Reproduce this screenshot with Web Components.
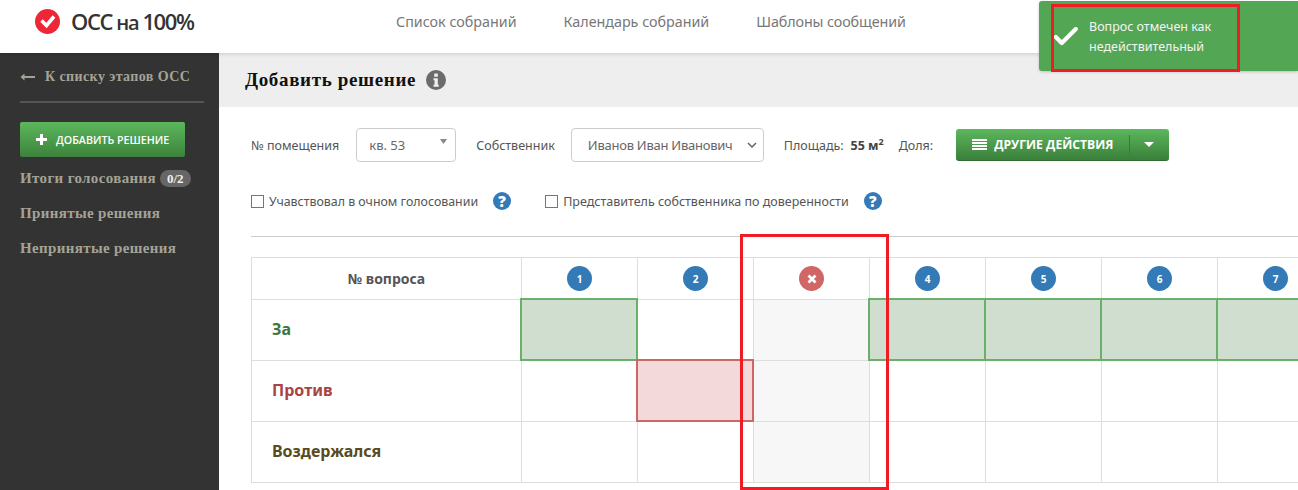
<!DOCTYPE html>
<html lang="ru">
<head>
<meta charset="utf-8">
<title>ОСС на 100%</title>
<style>
    html, body{ margin: 0; height: 100%; }
    body{
        width: 1298px;
        height: 490px;
        overflow: hidden;
        position: relative;
        font-family: "Noto Sans", sans-serif;
        color: #555;
        background: #fff;
    }
</style>
</head>
<body>
<app-shell>
    <app-header slot="top"></app-header>
    <side-bar slot="side"></side-bar>
    <page-title slot="main">Добавить решение</page-title>
    <owner-form slot="main"></owner-form>
    <vote-table slot="main"></vote-table>
</app-shell>
<toast-note>Вопрос отмечен как недействительный</toast-note>
<mark-frame style="left:1051px;top:4px;width:189px;height:68px"></mark-frame>
<mark-frame style="left:740px;top:234px;width:149px;height:256px"></mark-frame>

<script>
class AppShell extends HTMLElement{
    constructor(){
        super();
        this.attachShadow({mode: 'open'});
        this.shadowRoot.innerHTML = `
            <style>
                :host{ display: grid; grid-template: 53px 437px / 219px 1079px; width: 1298px; height: 490px; }
                .top{ grid-column: 1 / 3; position: relative; z-index: 2; }
                .main{ overflow: hidden; }
            </style>
            <div class="top"><slot name="top"></slot></div>
            <div><slot name="side"></slot></div>
            <div class="main"><slot name="main"></slot></div>`;
    }
}

class AppHeader extends HTMLElement{
    constructor(){
        super();
        this.attachShadow({mode: 'open'});
        this.shadowRoot.innerHTML = `
            <style>
                :host{ display: flex; align-items: center; height: 53px; background: #fff; box-shadow: 0 1px 4px rgba(0,0,0,.15); padding: 0 0 11px 35px; box-sizing: border-box; }
                svg{ display: block; margin-right: 11px; }
                .logo{ font: 600 22px "Open Sans", sans-serif; letter-spacing: -1.4px; color: #333; width: 325px; white-space: nowrap; }
                .logo small{ font-size: 20px; }
                nav{ display: flex; gap: 47px; font-size: 14.3px; color: #777; }
                nav span:last-child{ letter-spacing: -.1px; }
            </style>
            <svg width="25" height="25" viewBox="0 0 25 25">
                <circle cx="12.5" cy="12.5" r="12.5" fill="#ee2737"/>
                <path d="M6.5 11.5l5 5 7.5-9" fill="none" stroke="#fff" stroke-width="3.6"/>
            </svg>
            <div class="logo">ОСС <small>на</small> 100%</div>
            <nav><span>Список собраний</span><span>Календарь собраний</span><span>Шаблоны сообщений</span></nav>`;
    }
}

class SideBar extends HTMLElement{
    constructor(){
        super();
        this.attachShadow({mode: 'open'});
        this.shadowRoot.innerHTML = `
            <style>
                :host{ display: block; height: 100%; box-sizing: border-box; background: #333; color: #a5a396; padding: 14px 15px 0 20px; font: bold 15px "Liberation Serif", serif; letter-spacing: .35px; }
                .back{ display: flex; align-items: center; gap: 10px; height: 19px; padding-bottom: 15px; border-bottom: 2px solid #555; font-size: 14px; letter-spacing: .4px; white-space: nowrap; }
                .btn{ display: flex; align-items: center; gap: 9px; width: 165px; height: 35px; box-sizing: border-box; margin-top: 19px; padding-left: 16px; border-radius: 2px; background: linear-gradient(#5cb85c, #3c823c); color: #fff; font: 600 10.7px "Open Sans", sans-serif; letter-spacing: 0; }
                .item{ display: flex; align-items: center; gap: 4px; height: 35px; white-space: nowrap; }
                .item.first{ margin-top: 4px; }
                .badge{ background: #666; color: #eee; border-radius: 9px; padding: 0 7px; font-size: 13px; line-height: 17px; letter-spacing: 0; }
            </style>
            <div class="back">
                <svg width="15" height="10" viewBox="0 0 15 10"><path d="M0.5 5l4-3.5v2.6H15v1.8H4.500v2.600z" fill="#a5a396"/></svg>
                К списку этапов ОСС
            </div>
            <div class="btn">
                <svg width="11" height="11" viewBox="0 0 11 11"><path d="M4 0h3v4h4v3H7v4H4V7H0V4h4z" fill="#fff"/></svg>
                ДОБАВИТЬ РЕШЕНИЕ
            </div>
            <div class="item first">Итоги голосования <span class="badge">0/2</span></div>
            <div class="item">Принятые решения</div>
            <div class="item">Непринятые решения</div>`;
    }
}

class PageTitle extends HTMLElement{
    constructor(){
        super();
        this.attachShadow({mode: 'open'});
        this.shadowRoot.innerHTML = `
            <style>
                :host{ display: flex; align-items: center; gap: 10px; height: 54px; box-sizing: border-box; padding-left: 26px; background: #eee; color: #111; font: bold 19px "Liberation Serif", serif; letter-spacing: .65px; }
            </style>
            <slot></slot>
            <svg width="20" height="20" viewBox="0 0 20 20">
                <circle cx="10" cy="10" r="10" fill="#6b6b6b"/>
                <rect x="8.200" y="3.500" width="3.600" height="3.200" rx=".5" fill="#eee"/>
                <path d="M7.500 8.200h4.300v6.500h1v2H7.500v-2h1v-4.500h-1z" fill="#eee"/>
            </svg>`;
    }
}

class HelpMark extends HTMLElement{
    constructor(){
        super();
        this.attachShadow({mode: 'open'});
        this.shadowRoot.innerHTML = `
            <style>
                :host{ display: inline-flex; align-items: center; justify-content: center; width: 18px; height: 18px; border-radius: 50%; background: #337ab7; color: #fff; font: 800 15px "Open Sans", sans-serif; }
            </style>?`;
    }
}

class SelectBox extends HTMLElement{
    constructor(){
        super();
        this.attachShadow({mode: 'open'});
        this.shadowRoot.innerHTML = `
            <style>
                :host{ display: flex; align-items: center; justify-content: space-between; height: 34px; box-sizing: border-box; border: 1px solid #ccc; border-radius: 4px; font-size: 13px; color: #666; white-space: nowrap; }
            </style>
            <slot></slot><slot name="arrow"></slot>`;
    }
}

class GreenButton extends HTMLElement{
    constructor(){
        super();
        this.attachShadow({mode: 'open'});
        this.shadowRoot.innerHTML = `
            <style>
                :host{ display: flex; align-items: center; width: 213px; height: 32px; box-sizing: border-box; padding-left: 16px; border-radius: 3px; background: linear-gradient(#5cb85c, #3a7f3a); border-bottom: 1px solid #2f6b2f; color: #fff; font: 700 12.2px "Open Sans", sans-serif; white-space: nowrap; }
                svg.bars{ margin-right: 7px; }
                .sep{ width: 1px; height: 20px; background: #3a7a3a; margin: 0 14px 0 16px; }
            </style>
            <svg class="bars" width="15" height="11" viewBox="0 0 15 11"><path d="M0 0h15v2H0zM0 3h15v2H0zM0 6h15v2H0zM0 9h15v2H0z" fill="#fff"/></svg>
            ДРУГИЕ ДЕЙСТВИЯ
            <span class="sep"></span>
            <svg width="10" height="5" viewBox="0 0 10 5"><path d="M0 0h10L5 5z" fill="#fff"/></svg>`;
    }
}

class OwnerForm extends HTMLElement{
    constructor(){
        super();
        this.attachShadow({mode: 'open'});
        this.shadowRoot.innerHTML = `
            <style>
                :host{ display: block; margin: 0 0 0 32px; font-size: 12.500px; color: #555; white-space: nowrap; }
                .row1{ display: flex; align-items: center; height: 34px; padding-top: 21px; }
                .row2{ display: flex; align-items: center; height: 20px; margin-top: 29px; padding-bottom: 25px; border-bottom: 1px solid #ccc; }
                .box{ width: 11px; height: 11px; border: 1px solid #767676; margin-right: 5px; }
                b{ color: #444; margin-left: 7px; }
                sup{ font-size: 9px; line-height: 0; }
                .room{ width: 100px; padding-left: 12px; padding-right: 8px; margin: 0 20px 0 17px; }
                .owner{ width: 193px; padding-left: 16px; padding-right: 6px; margin: 0 20px 0 16px; letter-spacing: -.25px; }
                .tri{ align-self: flex-start; margin-top: 10px; }
            </style>
            <div class="row1">
                <span>№ помещения</span>
                <select-box class="room" style="box-sizing:border-box">кв. 53
                    <svg class="tri" slot="arrow" width="7" height="5" viewBox="0 0 7 5"><path d="M0 0h7L3.500 5z" fill="#888"/></svg>
                </select-box>
                <span>Собственник</span>
                <select-box class="owner" style="box-sizing:border-box">Иванов Иван Иванович
                    <svg slot="arrow" width="10" height="6" viewBox="0 0 10 6"><path d="M1 1l4 4 4-4" fill="none" stroke="#666" stroke-width="1.500"/></svg>
                </select-box>
                <span>Площадь:</span><b>55 м<sup>2</sup></b>
                <span style="margin:0 23px 0 15px">Доля:</span>
                <green-button></green-button>
            </div>
            <div class="row2">
                <span class="box"></span><span style="font-size:12.4px">Учавствовал в очном голосовании</span>
                <help-mark style="margin:0 34px 0 15px"></help-mark>
                <span class="box"></span><span>Представитель собственника по доверенности</span>
                <help-mark style="margin-left:15px"></help-mark>
            </div>`;
    }
}

class VoteTable extends HTMLElement{
    constructor(){
        super();
        this.attachShadow({mode: 'open'});
        this.shadowRoot.innerHTML = `
            <style>
                :host{ display: grid; grid-template-columns: 270px repeat(7, 116px); grid-template-rows: 42px repeat(3, 61px); width: max-content; margin: 20px 0 0 32px; border: solid #ddd; border-width: 1px 0 0 1px; }
                .c{ display: flex; align-items: center; box-sizing: border-box; border: solid #ddd; border-width: 0 1px 1px 0; position: relative; }
                .head{ justify-content: center; font: bold 14px "Noto Sans", sans-serif; color: #555; }
                .label{ padding: 0 0 2px 20px; font: bold 16px "Noto Sans", sans-serif; }
                .q{ justify-content: center; }
                .q span{ display: flex; align-items: center; justify-content: center; width: 25px; height: 25px; border-radius: 50%; background: #337ab7; color: #fff; font: bold 10px "Noto Sans", sans-serif; }
                .q span.off{ background: #d16666; }
                .off{ background: #f7f7f7; }
                .yes, .no{ z-index: 1; }
                .yes::after, .no::after{ content: ""; position: absolute; inset: -1px -1px -1px -1px; border: 2px solid; left: -2px; top: -2px; }
                .yes{ background: #cfdecf; }
                .yes::after{ border-color: #6ab06a; }
                .no{ background: #f4d9da; }
                .no::after{ border-color: #cf6666; }
            </style>`;
        const rows = [
            {label: 'За', color: '#3c763d', yes: [1, 4, 5, 6, 7]},
            {label: 'Против', color: '#a94442', no: [2]},
            {label: 'Воздержался', color: '#5a4a20'}
        ];
        let html = '<div class="c head">№ вопроса</div>';
        for(let n = 1; n <= 7; n++){
            html += n === 3
                ? `<div class="c q"><span class="off"><svg width="10" height="10" viewBox="0 0 10 10"><path d="M1.500 1.500l7 7M8.500 1.500l-7 7" stroke="#fff" stroke-width="2.800"/></svg></span></div>`
                : `<div class="c q"><span>${n}</span></div>`;
        }
        rows.forEach(r => {
            html += `<div class="c label" style="color:${r.color}">${r.label}</div>`;
            for(let n = 1; n <= 7; n++){
                let cls = '';
                if(n === 3) cls = 'off';
                else if(r.yes && r.yes.includes(n)) cls = 'yes';
                else if(r.no && r.no.includes(n)) cls = 'no';
                html += `<div class="c ${cls}"></div>`;
            }
        });
        this.shadowRoot.innerHTML += html;
    }
}

class ToastNote extends HTMLElement{
    constructor(){
        super();
        this.attachShadow({mode: 'open'});
        this.shadowRoot.innerHTML = `
            <style>
                :host{ position: absolute; z-index: 5; left: 1039px; top: 1px; width: 259px; height: 70px; box-sizing: border-box; display: flex; align-items: center; gap: 11px; padding: 2px 0 0 15px; background: #53a653; border-radius: 3px 0 0 3px; box-shadow: 0 1px 3px rgba(0,0,0,.2); color: #f4f4f4; font-size: 12.500px; line-height: 20px; }
                div{ width: 150px; }
            </style>
            <svg width="24" height="20" viewBox="0 0 24 20"><path d="M1.800 10l6 6 14-14" fill="none" stroke="#fff" stroke-width="4.200" stroke-linejoin="round" stroke-linecap="round"/></svg>
            <div><slot></slot></div>`;
    }
}

class MarkFrame extends HTMLElement{
    constructor(){
        super();
        this.attachShadow({mode: 'open'});
        this.shadowRoot.innerHTML = `
            <style>
                :host{ position: absolute; z-index: 6; box-sizing: border-box; border: 3px solid #ee1c25; pointer-events: none; }
            </style>`;
    }
}

customElements.define("app-shell", AppShell);
customElements.define("app-header", AppHeader);
customElements.define("side-bar", SideBar);
customElements.define("page-title", PageTitle);
customElements.define("help-mark", HelpMark);
customElements.define("select-box", SelectBox);
customElements.define("green-button", GreenButton);
customElements.define("owner-form", OwnerForm);
customElements.define("vote-table", VoteTable);
customElements.define("toast-note", ToastNote);
customElements.define("mark-frame", MarkFrame);
</script>
</body>
</html>
